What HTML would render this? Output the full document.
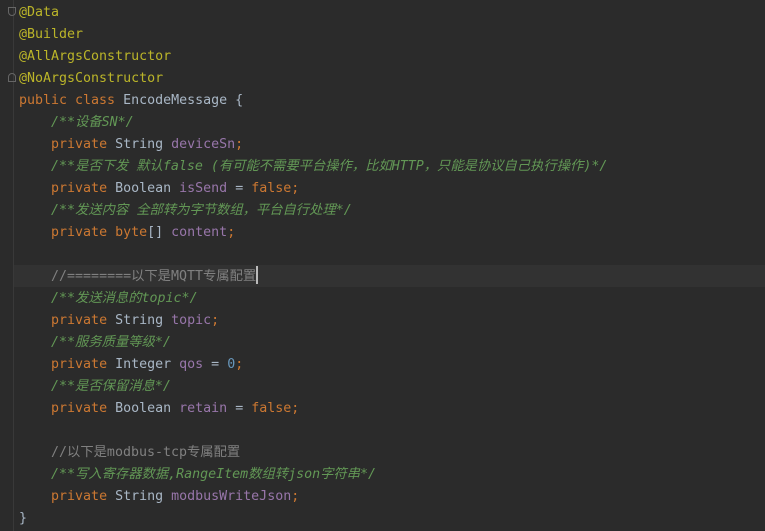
<!DOCTYPE html>
<html><head><meta charset="utf-8"><style>
html,body{margin:0;padding:0;background:#2b2b2b;width:765px;height:531px;overflow:hidden}
.g{position:absolute;left:13px;top:0;width:1px;height:531px;background:#393939}
.cur{position:absolute;left:14px;top:265px;width:751px;height:22px;background:#323232}
pre{position:absolute;left:19px;top:2px;margin:0;font:13.3px/22px "DejaVu Sans Mono","Noto Sans CJK SC",monospace;color:#a9b7c6}
.a{color:#bbb529}.k{color:#cc7832}.f{color:#9876aa}.d{color:#629755;font-style:italic}.c{color:#808080}.n{color:#6897bb}
.caret{display:inline-block;width:2px;height:18px;background:#bbb;vertical-align:-4px}
.fold{position:absolute;left:8px;width:8px;height:9px;border:1px solid #666;border-radius:0 0 4px 4px;box-sizing:border-box}
</style></head><body>
<div class="g"></div><div class="cur"></div>
<div class="fold" style="top:7px"></div><div class="fold" style="top:73px;border-radius:4px 4px 0 0"></div>
<pre><span class="a">@Data</span>
<span class="a">@Builder</span>
<span class="a">@AllArgsConstructor</span>
<span class="a">@NoArgsConstructor</span>
<span class="k">public class</span> EncodeMessage {
    <span class="d">/**设备SN*/</span>
    <span class="k">private</span> String <span class="f">deviceSn</span><span class="k">;</span>
    <span class="d">/**是否下发 默认false (有可能不需要平台操作，比如HTTP，只能是协议自己执行操作)*/</span>
    <span class="k">private</span> Boolean <span class="f">isSend</span> = <span class="k">false;</span>
    <span class="d">/**发送内容 全部转为字节数组，平台自行处理*/</span>
    <span class="k">private byte</span>[] <span class="f">content</span><span class="k">;</span>

    <span class="c">//========以下是MQTT专属配置</span><span class="caret"></span>
    <span class="d">/**发送消息的topic*/</span>
    <span class="k">private</span> String <span class="f">topic</span><span class="k">;</span>
    <span class="d">/**服务质量等级*/</span>
    <span class="k">private</span> Integer <span class="f">qos</span> = <span class="n">0</span><span class="k">;</span>
    <span class="d">/**是否保留消息*/</span>
    <span class="k">private</span> Boolean <span class="f">retain</span> = <span class="k">false;</span>

    <span class="c">//以下是modbus-tcp专属配置</span>
    <span class="d">/**写入寄存器数据,RangeItem数组转json字符串*/</span>
    <span class="k">private</span> String <span class="f">modbusWriteJson</span><span class="k">;</span>
}</pre>
</body></html>
